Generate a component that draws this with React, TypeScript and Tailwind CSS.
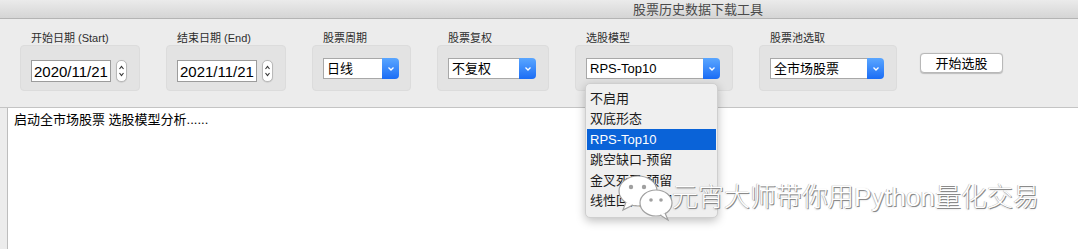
import React from 'react';

const FONT = '[font-family:"Liberation_Sans","Noto_Sans_CJK_SC",sans-serif]';

function Stepper() {
  return (
    <div className="ml-[5px] flex h-[22px] w-[11px] flex-col items-center justify-center rounded-[5px] border border-[#b9b9b9] bg-white shadow-[0_0.5px_1px_rgba(0,0,0,0.15)]">
      <svg width="7" height="16" viewBox="0 0 7 16">
        <path d="M1.5 6 L3.5 3.5 L5.5 6" fill="none" stroke="#333" strokeWidth="1.1" />
        <path d="M1.5 10 L3.5 12.5 L5.5 10" fill="none" stroke="#333" strokeWidth="1.1" />
      </svg>
    </div>
  );
}

function DateField({ value }: { value: string }) {
  return (
    <div className="mt-[14px] ml-[10px] flex items-center">
      <div className="flex h-[22px] w-[80px] items-center border border-[#9c9c9c] bg-white pl-[2px] text-[15px] leading-none text-black">
        {value}
      </div>
      <Stepper />
    </div>
  );
}

function SelectField({ value, width }: { value: string; width: string }) {
  return (
    <div className={`mt-[12px] ml-[10px] flex h-[21px] ${width}`}>
      <div className="flex flex-1 items-center border border-r-0 border-[#a8a8a8] bg-white pl-[3px] text-[13px] leading-none text-black">
        {value}
      </div>
      <div className="flex w-[17px] items-center justify-center rounded-r-[4px] bg-gradient-to-b from-[#5aa6ff] to-[#1a6cf5]">
        <svg width="8" height="6" viewBox="0 0 8 6">
          <path d="M1.5 1.5 L4 4 L6.5 1.5" fill="none" stroke="#fff" strokeWidth="1.3" />
        </svg>
      </div>
    </div>
  );
}

function Group({ label, boxW, children }: { label: string; boxW: string; children: React.ReactNode }) {
  return (
    <div className="flex flex-col">
      <div className="ml-[11px] h-[13px] text-[11px] leading-[13px] text-[#2e2e2e]">{label}</div>
      <div className={`h-[46px] ${boxW} rounded-[4px] border border-[#dcdcdc] bg-[#e3e3e3]`}>{children}</div>
    </div>
  );
}

const menuItems = ['不启用', '双底形态', 'RPS-Top10', '跳空缺口-预留', '金叉死叉-预留', '线性回归-预留'];

function WeChatLogo() {
  return (
    <svg width="64" height="50" viewBox="0 0 64 50">
      <ellipse cx="22" cy="19" rx="19" ry="15" fill="#fff" stroke="#a0a0a0" strokeWidth="1.2" />
      <path d="M10 30 L7 38 L17 33" fill="#fff" stroke="#a0a0a0" strokeWidth="1.2" />
      <circle cx="15" cy="15" r="2.2" fill="#a0a0a0" />
      <circle cx="28" cy="15" r="2.2" fill="#a0a0a0" />
      <ellipse cx="40" cy="31" rx="16" ry="13" fill="#fff" stroke="#a0a0a0" strokeWidth="1.2" />
      <path d="M49 41 L52 48 L44 43" fill="#fff" stroke="#a0a0a0" strokeWidth="1.2" />
      <circle cx="35" cy="28" r="1.8" fill="#a0a0a0" />
      <circle cx="45" cy="28" r="1.8" fill="#a0a0a0" />
    </svg>
  );
}

export default function App() {
  return (
    <div className={`relative h-[249px] w-[1078px] overflow-hidden bg-[#ececec] ${FONT}`}>
      {/* title bar */}
      <div className="flex h-[19px] items-center border-b border-[#b4b4b4] bg-gradient-to-b from-[#ebebeb] to-[#d5d5d5] pl-[633px] text-[13px] leading-none text-[#4a4a4a]">
        股票历史数据下载工具
      </div>

      {/* controls */}
      <div className="flex h-[89px] items-start gap-[26px] border-b border-[#c4c4c4] pt-[13px] pl-[20px]">
        <Group label="开始日期 (Start)" boxW="w-[120px]">
          <DateField value="2020/11/21" />
        </Group>
        <Group label="结束日期 (End)" boxW="w-[120px]">
          <DateField value="2021/11/21" />
        </Group>
        <Group label="股票周期" boxW="w-[99px]">
          <SelectField value="日线" width="w-[76px]" />
        </Group>
        <Group label="股票复权" boxW="w-[112px]">
          <SelectField value="不复权" width="w-[88px]" />
        </Group>
        <Group label="选股模型" boxW="w-[158px]">
          <SelectField value="RPS-Top10" width="w-[134px]" />
        </Group>
        <Group label="股票池选取" boxW="w-[138px]">
          <SelectField value="全市场股票" width="w-[114px]" />
        </Group>
        <div className="-ml-[3px] mt-[21px] flex h-[20px] w-[83px] items-center justify-center rounded-[4px] border border-[#b8b8b8] bg-white text-[13px] leading-none text-black shadow-[0_0.5px_1px_rgba(0,0,0,0.2)]">
          开始选股
        </div>
      </div>

      {/* output area */}
      <div className="ml-[7px] h-[141px] border-l border-[#bdbdbd] bg-white pt-[4px] pl-[6px] text-[13px] leading-[16px] text-black">
        启动全市场股票 选股模型分析......
      </div>

      {/* open dropdown menu */}
      <div className="absolute top-[83px] left-[585px] flex h-[135px] w-[133px] flex-col rounded-[5px] border border-[#cfcfcf] bg-[#efefef] py-[4px] shadow-[0_3px_10px_rgba(0,0,0,0.25)]">
        {menuItems.map((item, i) => (
          <div
            key={item}
            className={`mx-px flex h-[20.5px] items-center pl-[3px] text-[13px] leading-none ${
              i === 2 ? 'bg-[#0a63d8] text-white' : 'text-[#1c1c1c]'
            }`}
          >
            {item}
          </div>
        ))}
      </div>

      {/* watermark */}
      <div className="absolute top-[172px] left-[616px] flex items-center">
        <WeChatLogo />
        <div className="-ml-[8px] text-[26px] leading-none font-light text-white [text-shadow:1px_1px_0_#8a8a8a,-0.5px_-0.5px_0_#b4b4b4,0_1px_2px_rgba(0,0,0,0.25)]">
          元宵大师带你用Python量化交易
        </div>
      </div>
    </div>
  );
}
